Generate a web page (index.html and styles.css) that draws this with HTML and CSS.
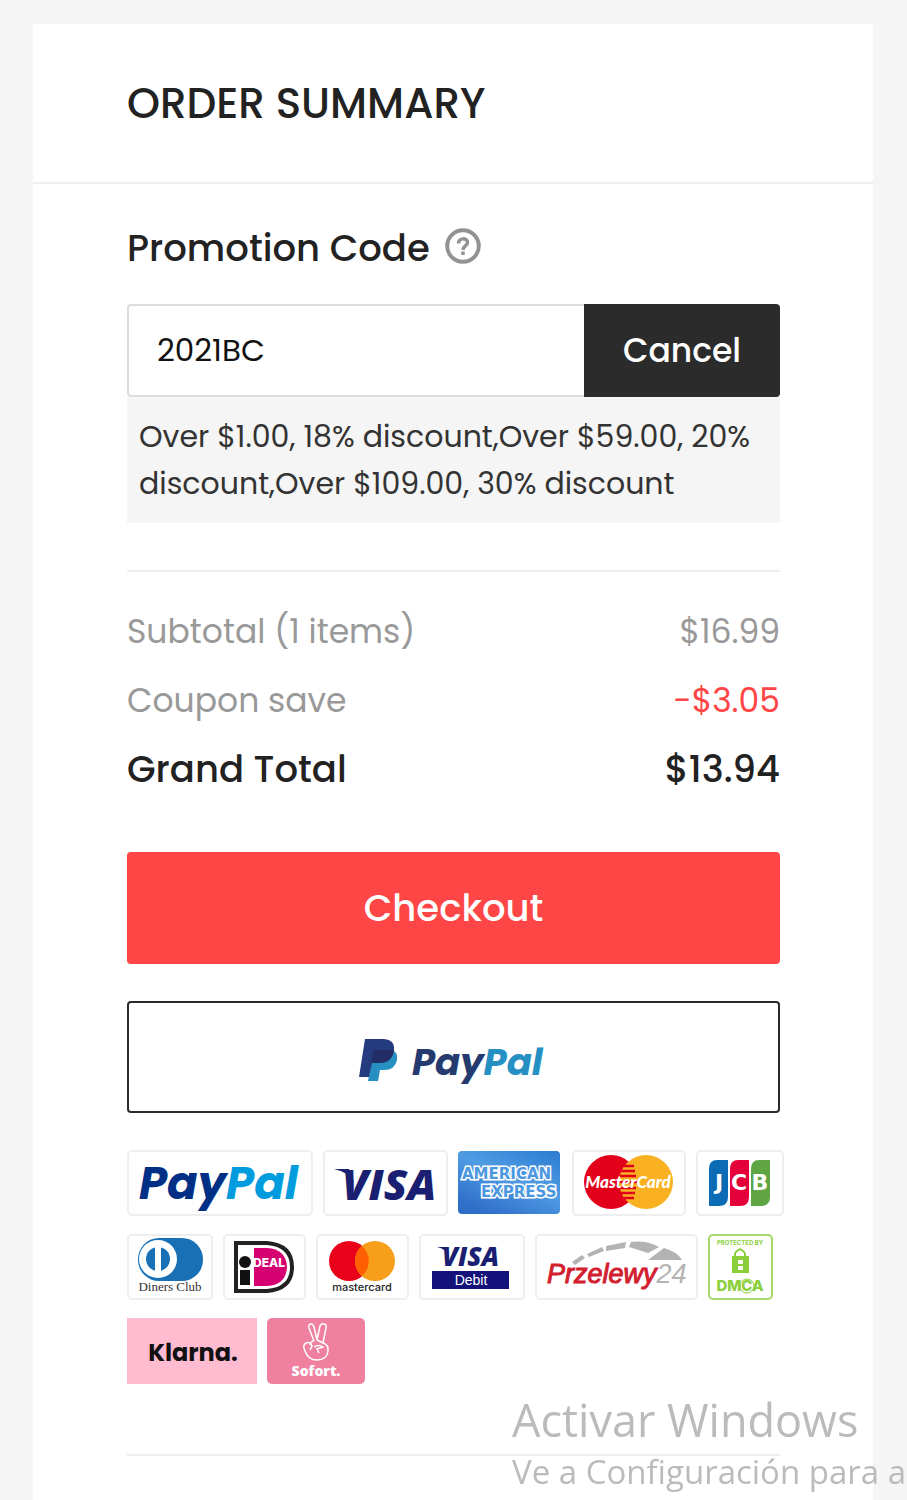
FILE: index.html
```html
<!DOCTYPE html>
<html lang="en">
<head>
    <meta charset="UTF-8">
    <meta name="viewport" content="width=device-width, initial-scale=1.0">
    <title>Order Summary</title>
    <link rel="stylesheet" href="styles.css">
</head>
<body>
    <main class="summary">
        <header class="summary-header">
            <h1>ORDER SUMMARY</h1>
        </header>

        <div class="summary-body">
            <form class="promo">
                <div class="promo-title">
                    <label for="promoCode">Promotion Code</label>
                    <button type="button" class="help" aria-label="Help">
                        <svg width="38" height="38" viewBox="0 0 38 38" fill="none" stroke="#929292">
                            <circle cx="19" cy="19" r="15.8" stroke-width="4"/>
                            <path d="M14.5 16.500c0-6 9-6 9-1 0 3.500-4.500 3.500-4.500 7.500" stroke-width="3.500"/>
                            <path d="M19 24.500v3.500" stroke-width="3.500"/>
                        </svg>
                    </button>
                </div>
                <div class="promo-row">
                    <input type="text" id="promoCode" name="promoCode" value="2021BC">
                    <button type="button" class="cancel">Cancel</button>
                </div>
                <p class="promo-note">Over $1.00, 18% discount,Over $59.00, 20% discount,Over $109.00, 30% discount</p>
            </form>

            <dl class="totals">
                <div class="line">
                    <dt>Subtotal (1 items)</dt>
                    <dd>$16.99</dd>
                </div>
                <div class="line">
                    <dt>Coupon save</dt>
                    <dd class="save">-$3.05</dd>
                </div>
                <div class="line grand">
                    <dt>Grand Total</dt>
                    <dd>$13.94</dd>
                </div>
            </dl>

            <button type="button" class="checkout">Checkout</button>
            <button type="button" class="paypal" aria-label="PayPal">
                <svg width="190" height="54" viewBox="0 0 190 54">
                    <path d="M15 20H33Q39 22 38 30Q36 40 25 40H21L19 51H9Z" fill="#2790c3"/>
                    <path d="M6 9H25Q36 10 35 20Q33 33 20 33H13L10 47H0Z" fill="#253b80"/>
                    <path d="M15 20H35Q33 33 20 33H12Z" fill="#222d65"/>
                    <text x="53" y="45" class="logo-paypal" font-size="37" fill="#253b70">Pay<tspan fill="#2790c3">Pal</tspan></text>
                </svg>
            </button>

            <ul class="payments">
                <li>
                    <svg width="186" height="66">
                        <text x="12" y="49" class="logo-paypal" font-size="45" fill="#002f86">Pay<tspan fill="#009cde">Pal</tspan></text>
                    </svg>
                </li>
                <li>
                    <svg width="125" height="66">
                        <path d="M11 19h15l5 14q-5-11-20-14z" fill="#1a1f71"/>
                        <text x="19" y="50" class="logo-open" font-size="43" fill="#1a1f71">VISA</text>
                    </svg>
                </li>
                <li class="plain">
                    <svg width="104" height="66">
                        <defs>
                            <linearGradient id="amex" x1="1" y1="0" x2="0.3" y2="1">
                                <stop offset="0" stop-color="#2b7bd0"/>
                                <stop offset="0.5" stop-color="#4f9be4"/>
                                <stop offset="1" stop-color="#2f6fc9"/>
                            </linearGradient>
                        </defs>
                        <rect y="1" width="102" height="63" rx="4" fill="url(#amex)"/>
                        <g class="logo-outline" font-size="15">
                            <text x="4" y="29">AMERICAN</text>
                            <text x="23" y="47">EXPRESS</text>
                        </g>
                    </svg>
                </li>
                <li>
                    <svg width="114" height="66">
                        <circle cx="39" cy="32" r="27" fill="#e3001b"/>
                        <circle cx="74" cy="32" r="27" fill="#f9b122"/>
                        <path d="M52 16h10M49 21h14M48 26h16M47 32h18M48 38h16M49 43h14M52 48h10" stroke="#e3001b" stroke-width="2.500"/>
                        <text x="56" y="38" class="logo-card" font-size="17">MasterCard</text>
                    </svg>
                </li>
                <li>
                    <svg width="88" height="66">
                        <path d="M21 10h11v37q0 9-9 9h-10v-37q0-9 8-9z" fill="#0b6cb5"/>
                        <path d="M42 10h11v37q0 9-9 9h-10v-37q0-9 8-9z" fill="#e4003a"/>
                        <path d="M63 10h11v37q0 9-9 9h-10v-37q0-9 8-9z" fill="#5fa544"/>
                        <text y="40" class="logo-wide" font-size="22" text-anchor="middle"><tspan x="23">J</tspan><tspan x="43">C</tspan><tspan x="64">B</tspan></text>
                    </svg>
                </li>
                <li>
                    <svg width="86" height="66">
                        <rect x="11" y="4" width="65" height="43" rx="21" fill="#1a70b5"/>
                        <circle cx="31" cy="25" r="19" fill="#fff"/>
                        <circle cx="31" cy="25" r="12" fill="#1a70b5"/>
                        <path d="M31 12v26" stroke="#fff" stroke-width="6"/>
                        <text x="43" y="57" class="logo-serif" font-size="13" fill="#333">Diners Club</text>
                    </svg>
                </li>
                <li>
                    <svg width="83" height="66">
                        <path d="M13 9h31q25 2 25 24t-25 24H13z" fill="#fff" stroke="#222" stroke-width="4"/>
                        <circle cx="22" cy="28" r="6" fill="#111"/>
                        <path d="M17 36h10v15H17z" fill="#111"/>
                        <path d="M31 14h13q19 1 20 19-1 18-20 19H31z" fill="#d50072"/>
                        <text x="30" y="33" class="logo-ideal" font-size="12">DEAL</text>
                    </svg>
                </li>
                <li>
                    <svg width="93" height="66">
                        <circle cx="33" cy="27" r="20" fill="#eb001b"/>
                        <circle cx="59" cy="27" r="20" fill="#f79e1b"/>
                        <path d="M46 12a20 20 0 0 1 0 30a20 20 0 0 1 0-30z" fill="#ff5f00"/>
                        <text x="46" y="57" class="logo-center" font-size="11" fill="#222">mastercard</text>
                    </svg>
                </li>
                <li>
                    <svg width="106" height="66">
                        <path d="M18 13h9l3 9q-3-7-12-9z" fill="#1a1f71"/>
                        <text x="23" y="32" class="logo-open" font-size="26" fill="#1a1f71">VISA</text>
                        <path d="M13 37h77v18H13z" fill="#12127a"/>
                        <text x="52" y="51" class="logo-debit" font-size="14" fill="#fff">Debit</text>
                    </svg>
                </li>
                <li>
                    <svg width="163" height="66">
                        <g fill="#b3b3b3">
                            <path d="M37 28l10-7 3 3-10 7zM52 20l15-7 2 4-15 6zM71 12l20-4-1 6-19 3z"/>
                            <path d="M96 8q15-2 28 5l-11 6-19-6zM129 14q14 4 18 12h-34z"/>
                        </g>
                        <text x="12" y="49" class="logo-przelewy" font-size="27">Przelewy<tspan class="logo-24">24</tspan></text>
                    </svg>
                </li>
                <li class="dmca">
                    <svg width="65" height="66" fill="#8ccf3d">
                        <text x="32" y="11" class="logo-center bold" font-size="6">PROTECTED BY</text>
                        <path d="M27 23v-3q0-2 5-5 5 3 5 5v3" fill="none" stroke="#8ccf3d" stroke-width="2"/>
                        <path d="M24 22h17v17H24z"/>
                        <path d="M30 26h5v4h-5zM30 32h5v4h-5z" fill="#fff"/>
                        <circle cx="39" cy="52" r="7" fill="none" stroke="#8ccf3d"/>
                        <text x="32" y="57" class="logo-center heavy" font-size="15">DMCA</text>
                    </svg>
                </li>
                <li class="plain klarna">
                    <svg width="130" height="66">
                        <text x="66" y="43" class="klarna-text" font-size="24">Klarna.</text>
                    </svg>
                </li>
                <li class="plain sofort">
                    <svg width="98" height="66">
                        <path d="M47 23l-5-13q-1-4 2-4 2 0 3 3l3 13 3-14q1-3 4-2 3 0 2 4l-3 15q6 2 5 8-1 9-11 9-9 0-12-9-3-6 1-8 4-2 6 3l-2 4M47 23q-3 0-4 4M50 22l6 3M47 29q5-3 9 0l-6 2 2 4" fill="none" stroke="#fff" stroke-width="1.500"/>
                        <text x="49" y="58" class="sofort-text" font-size="14">Sofort.</text>
                    </svg>
                </li>
            </ul>
            <hr>
        </div>
    </main>

    <aside class="watermark">
        <p class="watermark-title">Activar Windows</p>
        <p class="watermark-text">Ve a Configuración para a</p>
    </aside>
</body>
</html>
```
FILE: styles.css
```css
* {
    box-sizing: border-box;
}
body {
    font-family: 'Poppins', 'Inter', sans-serif;
    background-color: #f5f5f5;
    color: #222;
    margin: 0;
    padding: 24px 34px 0 33px;
}
h1, p, dl, dd, ul {
    margin: 0;
    padding: 0;
}
button, input {
    font-family: inherit;
}
button {
    cursor: pointer;
}
svg {
    display: block;
}
.summary {
    background: #fff;
    min-height: calc(100vh - 24px);
}
.summary-header {
    height: 160px;
    padding: 0 94px;
    display: flex;
    align-items: center;
    border-bottom: 2px solid #eee;
}
.summary-header h1 {
    font-size: 42px;
    font-weight: 500;
}
.summary-body {
    padding: 40px 93px 0 94px;
}
.promo-title {
    display: flex;
    align-items: center;
    gap: 14px;
    height: 48px;
    margin-bottom: 32px;
    font-size: 37px;
    font-weight: 500;
}
.help {
    padding: 0 0 4px;
    border: none;
    background: none;
}
.promo-row {
    display: flex;
    height: 93px;
}
.promo-row input {
    flex: 1;
    min-width: 0;
    padding: 0 28px;
    font-size: 31px;
    color: #111;
    border: 2px solid #ddd;
    border-right: none;
    border-radius: 4px 0 0 4px;
}
.cancel {
    width: 196px;
    font-size: 33px;
    font-weight: 500;
    color: #fff;
    background: #2b2b2b;
    border: none;
    border-radius: 0 4px 4px 0;
}
.promo-note {
    padding: 16px 12px;
    font-size: 30px;
    line-height: 47px;
    background: #f5f5f5;
    color: #333;
}
.totals {
    margin-top: 47px;
    padding: 25px 0 48px;
    border-top: 2px solid #eee;
}
.line {
    display: flex;
    justify-content: space-between;
    font-size: 33px;
    line-height: 69px;
    color: #999;
}
.line .save {
    color: #ff4646;
}
.line.grand {
    font-size: 37px;
    font-weight: 500;
    color: #222;
}
.checkout, .paypal {
    display: flex;
    align-items: center;
    justify-content: center;
    width: 100%;
    height: 112px;
    border-radius: 4px;
}
.checkout {
    margin-bottom: 37px;
    font-size: 37px;
    font-weight: 500;
    color: #fff;
    background: #ff4646;
    border: none;
}
.paypal {
    margin-bottom: 37px;
    background: #fff;
    border: 2px solid #2b2b2b;
}

/* payment methods */
.payments {
    display: flex;
    flex-wrap: wrap;
    gap: 18px 10px;
    margin-right: -6px;
    list-style: none;
}
.payments li {
    border-radius: 5px;
    box-shadow: inset 0 0 0 2px #eee;
}
.payments .plain {
    box-shadow: none;
}
.payments .dmca {
    box-shadow: inset 0 0 0 2px #a5d968;
}
.payments .klarna {
    background: #ffbcd0;
    border-radius: 0;
}
.payments .sofort {
    background: #ef809f;
}
.logo-paypal {
    font-family: 'Poppins', 'Inter', sans-serif;
    font-weight: 700;
    font-style: italic;
}
.logo-open {
    font-family: 'Open Sans', sans-serif;
    font-weight: 800;
    font-style: italic;
}
.logo-outline {
    font-family: 'DejaVu Sans', sans-serif;
    font-weight: 700;
    fill: #4c98e0;
    stroke: #fff;
    stroke-width: 3px;
    paint-order: stroke;
}
.logo-card {
    font-family: 'Lato', sans-serif;
    font-weight: 900;
    font-style: italic;
    text-anchor: middle;
    fill: #fff;
}
.logo-wide {
    font-family: 'DejaVu Sans', sans-serif;
    font-weight: 700;
    fill: #fff;
}
.logo-serif {
    font-family: 'Liberation Serif', serif;
    text-anchor: middle;
}
.logo-ideal {
    font-family: 'Inter', sans-serif;
    font-weight: 800;
    fill: #fff;
}
.logo-center {
    font-family: 'Inter', sans-serif;
    font-weight: 500;
    text-anchor: middle;
}
.logo-debit {
    font-family: 'Liberation Sans', sans-serif;
    text-anchor: middle;
}
.logo-przelewy {
    font-family: 'Liberation Sans', sans-serif;
    font-style: italic;
    fill: #d2202f;
    stroke: #d2202f;
}
.logo-24 {
    fill: #b3b3b3;
    stroke: none;
}
.bold {
    font-weight: 700;
}
.heavy {
    font-weight: 800;
}
.klarna-text {
    font-family: 'Poppins', 'Inter', sans-serif;
    font-weight: 700;
    text-anchor: middle;
    fill: #111;
}
.sofort-text {
    font-family: 'Open Sans', sans-serif;
    font-weight: 800;
    text-anchor: middle;
    fill: #fff;
}
hr {
    margin: 70px 0 0;
    border: none;
    border-top: 2px solid #eee;
}

/* sits over the page in the corner of the window */
.watermark {
    position: fixed;
    left: 512px;
    right: 0;
    bottom: 0;
    height: 106px;
    overflow: hidden;
    white-space: nowrap;
    font-family: 'Open Sans', sans-serif;
    color: #bbb;
    pointer-events: none;
}
.watermark-title {
    font-size: 45px;
    line-height: 52px;
}
.watermark-text {
    font-size: 33px;
    line-height: 52px;
}
```
